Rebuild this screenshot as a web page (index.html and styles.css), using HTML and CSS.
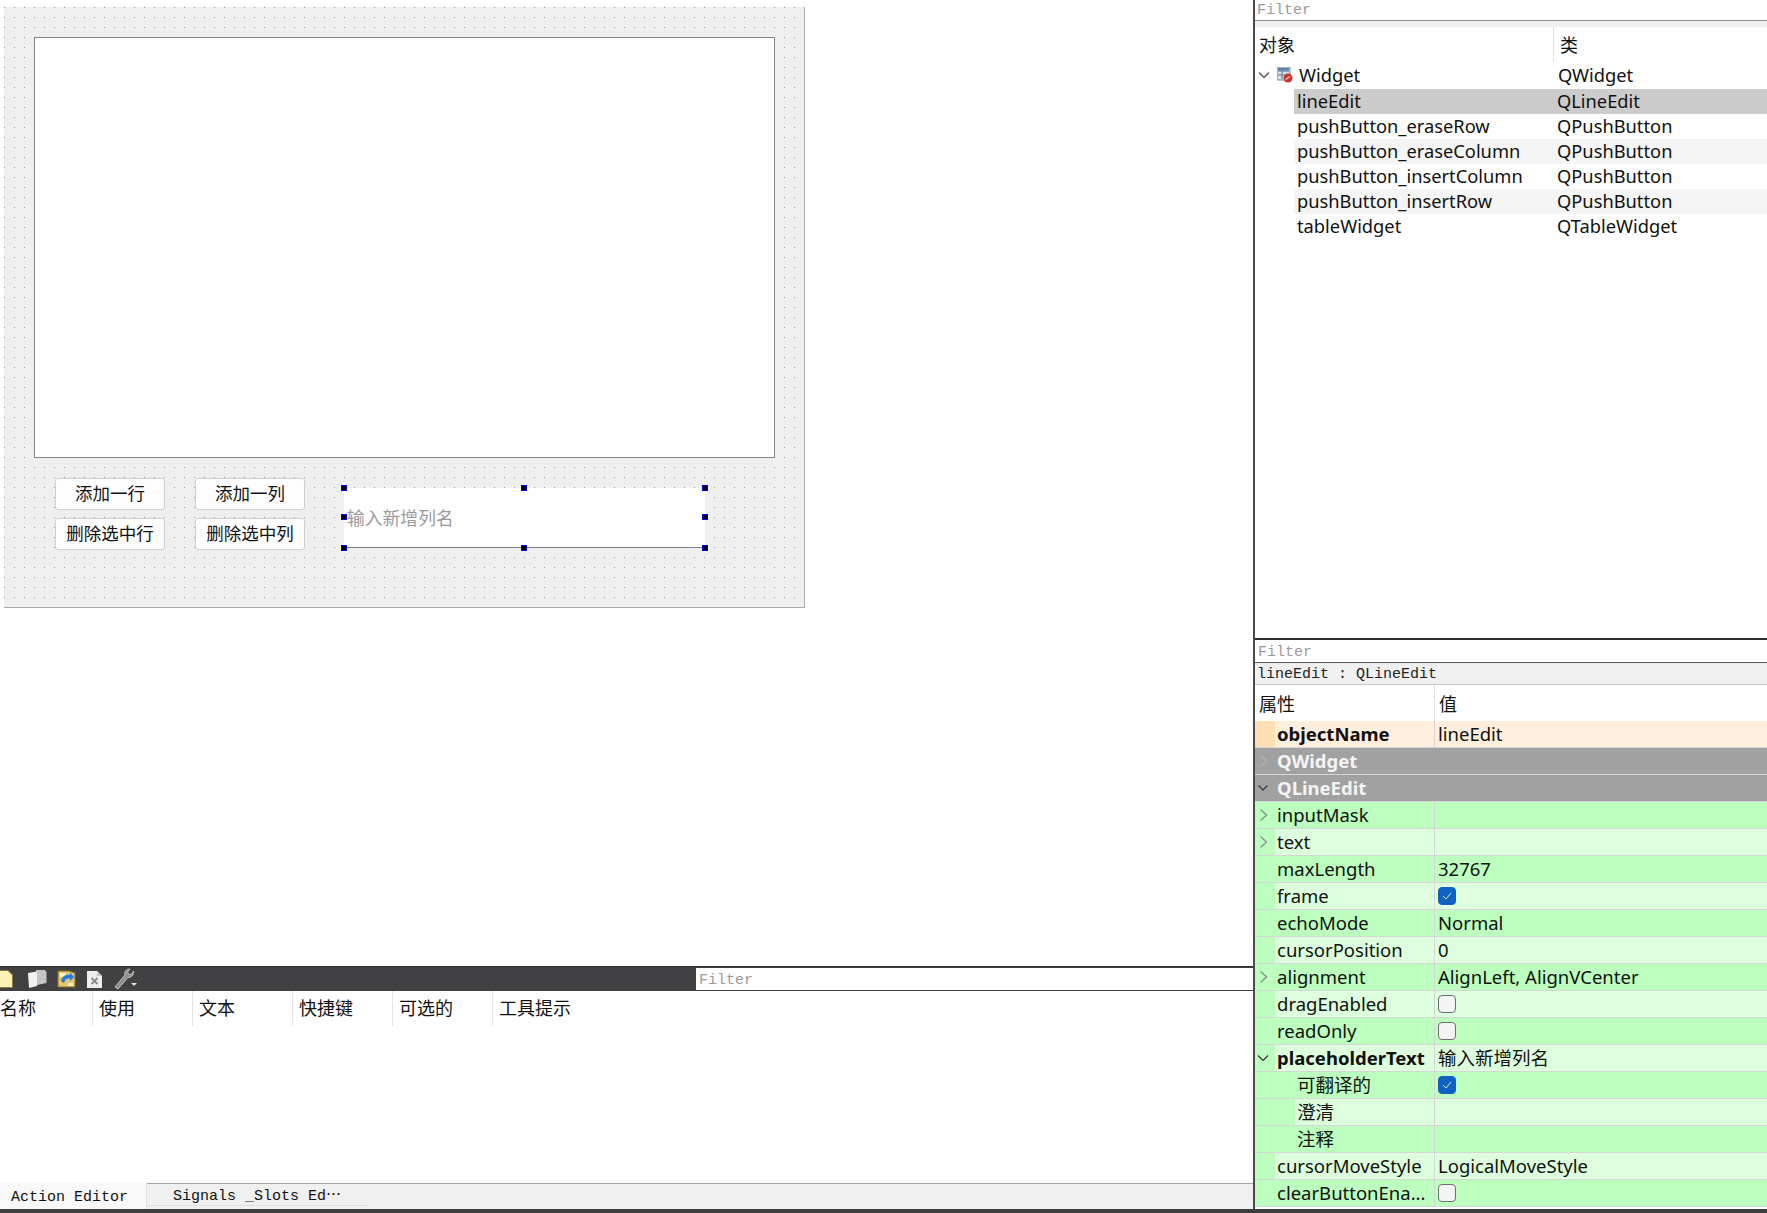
FILE: index.html
```html
<!DOCTYPE html>
<html lang="zh-CN">
<head>
  <meta charset="UTF-8">
  <title>Qt Designer</title>
  <link rel="stylesheet" href="styles.css">
</head>
<body>
  <div class="main">
    <div class="left_side">
      <div class="form_area">
        <div class="form">
          <div class="table_widget"></div>
          <div class="form_controls">
            <div class="button_grid">
              <button>添加一行</button>
              <button>添加一列</button>
              <button>删除选中行</button>
              <button>删除选中列</button>
            </div>
            <div class="line_edit">
              <span class="placeholder">输入新增列名</span>
              <i class="handle h_tl"></i><i class="handle h_tc"></i><i class="handle h_tr"></i>
              <i class="handle h_ml"></i><i class="handle h_mr"></i>
              <i class="handle h_bl"></i><i class="handle h_bc"></i><i class="handle h_br"></i>
            </div>
          </div>
        </div>
      </div>

      <div class="action_toolbar">
        <div class="action_icons">
          <svg class="tool_icon icon_new" width="13" height="18" viewBox="0 0 13 18"><path d="M-6 .5H8L12.5 5V17.500H-6z" fill="#fdf2b4" stroke="#8a7a3c"/></svg>
          <svg class="tool_icon icon_copy" width="20" height="20" viewBox="0 0 20 20"><path d="M9 1H18L19.500 3V14L10 16z" fill="#c4c4c4"/><path d="M1 4L10 2.500V17L2 19z" fill="#f2f2f2"/></svg>
          <svg class="tool_icon icon_open" width="19" height="20" viewBox="0 0 19 20"><path d="M1 2H12L18 4V18H1z" fill="#e5c66a" stroke="#8a6a1c"/><path d="M3 4H9V8H3zM11 14H16V17H11z" fill="#fff3c4"/><path d="M4 12C5 7 9 5 13 6L13 3.500L17 8L13 12V9.500C10 9 8 10 7 14z" fill="#2377e0"/></svg>
          <svg class="tool_icon icon_delete" width="17" height="19" viewBox="0 0 17 19"><path d="M1 1H11L16 6V18H1z" fill="#efefef"/><path d="M11 1V6H16z" fill="#c8c8c8"/><path d="M5.500 8L11.500 14M11.500 8L5.500 14" stroke="#8c8c8c" stroke-width="2"/></svg>
          <svg class="tool_icon icon_wrench" width="24" height="22" viewBox="0 0 24 22"><path d="M2 19L12 7C11 4 13 1 17 1L14.500 4L16 6.500L19 6L20.500 3C21 7 18 10 15 9.500L5 21z" fill="#8f8f8f" stroke="#d4d4d4" stroke-width=".8"/><path d="M18 15H24L21 18z" fill="#e4e4e4"/></svg>
        </div>
        <div class="filter_box action_filter">Filter</div>
      </div>

      <div class="action_header">
        <div class="action_col first_col">名称</div>
        <div class="action_col">使用</div>
        <div class="action_col">文本</div>
        <div class="action_col">快捷键</div>
        <div class="action_col">可选的</div>
        <div class="action_col">工具提示</div>
      </div>
      <div class="action_body"></div>

      <div class="tab_bar">
        <div class="tab tab_active">Action Editor</div>
        <div class="tab tab_other">Signals _Slots Ed⋯</div>
      </div>
    </div>

    <div class="right_side">
      <div class="filter_box object_filter">Filter</div>
      <div class="filter_gap"></div>
      <div class="tree_header">
        <div class="tree_col_name">对象</div>
        <div class="tree_col_class">类</div>
      </div>
      <div class="tree_root">
        <svg class="chevron root_chevron" width="12" height="12" viewBox="0 0 12 12"><path d="M1 3.500L6 8.500L11 3.500" fill="none" stroke="#444" stroke-width="1.200"/></svg>
        <svg class="widget_icon" width="16" height="16" viewBox="0 0 16 16">
          <rect x="0" y="0" width="13" height="13" fill="#d5dde6" stroke="#7d8a99"/>
          <path d="M1 4H12M1 8H12M5 1V12" stroke="#5c7894"/>
          <rect x="1" y="1" width="11" height="2.500" fill="#5a82ad"/>
          <circle cx="11" cy="11" r="4.500" fill="#c8362c"/>
          <path d="M8.500 12.500L13 9.500" stroke="#f4d0cc" stroke-width="1.200"/>
        </svg>
        <span class="root_name">Widget</span>
        <span class="tree_class">QWidget</span>
      </div>
      <div class="tree_row selected"><span class="tree_name">lineEdit</span><span class="tree_class">QLineEdit</span></div>
      <div class="tree_row"><span class="tree_name">pushButton_eraseRow</span><span class="tree_class">QPushButton</span></div>
      <div class="tree_row alt"><span class="tree_name">pushButton_eraseColumn</span><span class="tree_class">QPushButton</span></div>
      <div class="tree_row"><span class="tree_name">pushButton_insertColumn</span><span class="tree_class">QPushButton</span></div>
      <div class="tree_row alt"><span class="tree_name">pushButton_insertRow</span><span class="tree_class">QPushButton</span></div>
      <div class="tree_row"><span class="tree_name">tableWidget</span><span class="tree_class">QTableWidget</span></div>
      <div class="tree_space"></div>

      <div class="filter_box prop_filter">Filter</div>
      <div class="prop_title">lineEdit : QLineEdit</div>
      <div class="prop_header">
        <div class="prop_header_name">属性</div>
        <div class="prop_header_value">值</div>
      </div>

      <div class="prop_row orange"><div class="gutter"></div><div class="name bold">objectName</div><div class="value">lineEdit</div></div>
      <div class="prop_row group">
        <div class="gutter"><svg class="chevron" width="9" height="14" viewBox="0 0 9 14"><path d="M1.500 1.500L7.500 7L1.500 12.500" fill="none" stroke="#b4b4b4" stroke-width="1.200"/></svg></div>
        <div class="name bold">QWidget</div>
      </div>
      <div class="prop_row group">
        <div class="gutter"><svg class="chevron" width="12" height="8" viewBox="0 0 12 8"><path d="M1.500 1.500L6 6L10.500 1.500" fill="none" stroke="#333" stroke-width="1.200"/></svg></div>
        <div class="name bold">QLineEdit</div>
      </div>
      <div class="prop_row green">
        <div class="gutter"><svg class="chevron" width="9" height="14" viewBox="0 0 9 14"><path d="M1.500 1.500L7.500 7L1.500 12.500" fill="none" stroke="#888" stroke-width="1.200"/></svg></div>
        <div class="name">inputMask</div><div class="value"></div>
      </div>
      <div class="prop_row light">
        <div class="gutter"><svg class="chevron" width="9" height="14" viewBox="0 0 9 14"><path d="M1.500 1.500L7.500 7L1.500 12.500" fill="none" stroke="#888" stroke-width="1.200"/></svg></div>
        <div class="name">text</div><div class="value"></div>
      </div>
      <div class="prop_row green"><div class="gutter"></div><div class="name">maxLength</div><div class="value">32767</div></div>
      <div class="prop_row light"><div class="gutter"></div><div class="name">frame</div><div class="value"><span class="check checked"><svg width="10" height="8" viewBox="0 0 10 8"><path d="M1 4L4 7L9 1" fill="none" stroke="#cfe2f7" stroke-width="1"/></svg></span></div></div>
      <div class="prop_row green"><div class="gutter"></div><div class="name">echoMode</div><div class="value">Normal</div></div>
      <div class="prop_row light"><div class="gutter"></div><div class="name">cursorPosition</div><div class="value">0</div></div>
      <div class="prop_row green">
        <div class="gutter"><svg class="chevron" width="9" height="14" viewBox="0 0 9 14"><path d="M1.500 1.500L7.500 7L1.500 12.500" fill="none" stroke="#888" stroke-width="1.200"/></svg></div>
        <div class="name">alignment</div><div class="value">AlignLeft, AlignVCenter</div>
      </div>
      <div class="prop_row light"><div class="gutter"></div><div class="name">dragEnabled</div><div class="value"><span class="check"></span></div></div>
      <div class="prop_row green"><div class="gutter"></div><div class="name">readOnly</div><div class="value"><span class="check"></span></div></div>
      <div class="prop_row light">
        <div class="gutter"><svg class="chevron" width="12" height="8" viewBox="0 0 12 8"><path d="M1 1.500L6 6.500L11 1.500" fill="none" stroke="#333" stroke-width="1.200"/></svg></div>
        <div class="name bold">placeholderText</div><div class="value">输入新增列名</div>
      </div>
      <div class="prop_row green"><div class="gutter"></div><div class="name sub">可翻译的</div><div class="value"><span class="check checked"><svg width="10" height="8" viewBox="0 0 10 8"><path d="M1 4L4 7L9 1" fill="none" stroke="#cfe2f7" stroke-width="1"/></svg></span></div></div>
      <div class="prop_row light sub_light"><div class="gutter"></div><div class="name sub">澄清</div><div class="value"></div></div>
      <div class="prop_row green"><div class="gutter"></div><div class="name sub">注释</div><div class="value"></div></div>
      <div class="prop_row light"><div class="gutter"></div><div class="name">cursorMoveStyle</div><div class="value">LogicalMoveStyle</div></div>
      <div class="prop_row green"><div class="gutter"></div><div class="name">clearButtonEna...</div><div class="value"><span class="check"></span></div></div>
    </div>
  </div>
  <div class="bottom_edge"></div>
</body>
</html>
```

FILE: styles.css
```css
:root {
  --ui_font: "Noto Sans", "Noto Sans CJK SC", sans-serif;
  --mono_font: "Liberation Mono", "Noto Sans CJK SC", monospace;
  --cell_line: #d6d6d6;
}

html, body {
  margin: 0;
  height: 100%;
  background-color: white;
  overflow: hidden;
}

body {
  display: flex;
  flex-direction: column;
  height: 1213px;
  font-family: var(--ui_font);
  font-size: 18.5px;
  color: #111;
}

.main {
  display: flex;
  height: 1209px;
}

.left_side {
  width: 1253px;
  display: flex;
  flex-direction: column;
}

.right_side {
  width: 512px;
  border-left: 2px solid #4a4a4a;
  display: flex;
  flex-direction: column;
}

.bottom_edge {
  height: 4px;
  background-color: #3e3e40;
}

/* form being edited */
.form_area {
  height: 966px;
  padding: 7px 0 0 4px;
  box-sizing: border-box;
}

.form {
  width: 801px;
  height: 601px;
  box-sizing: border-box;
  padding: 30px 0 0 30px;
  background-color: #efefef;
  background-image: radial-gradient(circle at .5px .5px, #999 .6px, transparent .7px);
  background-size: 10px 10px;
  border-right: 1.500px solid #ababab;
  border-bottom: 1.500px solid #ababab;
}

.table_widget {
  width: 741px;
  height: 421px;
  box-sizing: border-box;
  background-color: white;
  border: 1.500px solid #82878c;
}

.form_controls {
  display: flex;
  margin: 20px 0 0 21px;
}

.button_grid {
  display: grid;
  grid-template-columns: 110px 110px;
  grid-auto-rows: 32px;
  column-gap: 30px;
  row-gap: 8px;
}

button {
  font-family: "Noto Sans CJK SC", sans-serif;
  font-size: 17.500px;
  line-height: 26px;
  color: #111;
  background-color: #fdfdfd;
  border: 1px solid #cfcfcf;
  border-radius: 3px;
  padding: 0 0 3px;
}

.line_edit {
  position: relative;
  width: 361px;
  height: 60px;
  margin: 10px 0 0 39px;
  box-sizing: border-box;
  display: flex;
  align-items: center;
  padding: 0 0 2px 3px;
  background-color: white;
  border-bottom: 1.500px solid #808080;
}

.placeholder {
  font-family: "Noto Sans CJK SC", sans-serif;
  font-size: 17.800px;
  color: #9a9a9a;
}

.handle {
  position: absolute;
  width: 4px;
  height: 4px;
  background-color: #000;
  border: 1px solid #0000e0;
}

.h_tl { left: -3px; top: -3px; }
.h_tc { left: 177px; top: -3px; }
.h_tr { right: -3px; top: -3px; }
.h_ml { left: -3px; top: 26px; }
.h_mr { right: -3px; top: 26px; }
.h_bl { left: -3px; bottom: -4px; }
.h_bc { left: 177px; bottom: -4px; }
.h_br { right: -3px; bottom: -4px; }

/* action editor */
.action_toolbar {
  height: 25px;
  box-sizing: border-box;
  display: flex;
  justify-content: space-between;
  align-items: center;
  background-color: #414143;
  border-top: 1px solid #2e2e2e;
}

.action_icons {
  display: flex;
  align-items: center;
}

.tool_icon {
  display: block;
}

.icon_new { margin-right: 14px; }
.icon_copy { margin-right: 10px; }
.icon_open { margin-right: 10px; }
.icon_delete { margin-right: 10px; }

.filter_box {
  font-family: var(--mono_font);
  font-size: 15px;
  color: #9a9a9a;
  background-color: white;
  box-sizing: border-box;
}

.action_filter {
  width: 557px;
  height: 22px;
  line-height: 25px;
  padding-left: 3px;
}

.action_header {
  height: 35px;
  display: flex;
  font-family: "Noto Sans CJK SC", sans-serif;
  font-size: 18px;
}

.action_col {
  width: 100px;
  box-sizing: border-box;
  padding-left: 6px;
  line-height: 33px;
  border-right: 1px solid #e4e4e4;
}

.first_col {
  width: 93px;
  padding-left: 0;
}

.action_col:last-child {
  border-right: 0;
}

.action_body {
  flex: 1;
}

.tab_bar {
  height: 26px;
  display: flex;
  font-family: var(--mono_font);
  font-size: 15px;
  background-color: #f0f0f0;
  border-top: 1px solid #a6a6a6;
  box-sizing: border-box;
}

.tab {
  box-sizing: border-box;
  line-height: 25px;
}

.tab_active {
  width: 147px;
  margin-top: -1px;
  padding: 2px 0 0 11px;
  background-color: #f8f8f8;
  border-right: 1px solid #e2e2e2;
}

.tab_other {
  width: 222px;
  height: 22px;
  padding-left: 26px;
  border-bottom: 1px solid #e0e0e0;
}

/* object inspector */
.object_filter {
  height: 21px;
  line-height: 21px;
  padding-left: 2px;
  border-bottom: 1.500px solid #8a8a8a;
}

.filter_gap {
  height: 6px;
  background-color: #f0f0f0;
}

.tree_header {
  height: 35px;
  display: flex;
  font-family: "Noto Sans CJK SC", sans-serif;
  font-size: 18px;
  line-height: 34px;
}

.tree_col_name {
  width: 299px;
  box-sizing: border-box;
  padding-left: 4px;
  border-right: 1px solid #e0e0e0;
}

.tree_col_class {
  padding-left: 6px;
}

.tree_root {
  height: 27px;
  box-sizing: border-box;
  padding-bottom: 2px;
  display: flex;
  align-items: center;
  font-size: 18.300px;
}

.root_chevron {
  margin-left: 3px;
}

.widget_icon {
  margin-left: 7px;
}

.root_name {
  width: 259px;
  margin-left: 6px;
}

.tree_row {
  height: 25px;
  line-height: 23px;
  margin-left: 39px;
  display: flex;
  font-size: 18.300px;
}

.tree_row.selected {
  background-color: #cccccc;
}

.tree_row.alt {
  background-color: #f5f5f5;
}

.tree_name {
  width: 260px;
  padding-left: 3px;
}

.tree_space {
  height: 399px;
  flex: none;
}

/* property editor */
.prop_filter {
  height: 25px;
  line-height: 26px;
  padding-left: 3px;
  border-top: 2px solid #2c2c2c;
  border-bottom: 1.500px solid #555;
}

.prop_title {
  height: 22px;
  line-height: 24px;
  box-sizing: border-box;
  padding-left: 2px;
  font-family: var(--mono_font);
  font-size: 15px;
  color: #222;
  background-color: #f0f0f0;
  border-bottom: 1px solid #c8c8c8;
}

.prop_header {
  height: 36px;
  display: flex;
  font-family: "Noto Sans CJK SC", sans-serif;
  font-size: 18px;
  line-height: 36px;
}

.prop_header_name {
  width: 180px;
  box-sizing: border-box;
  padding-left: 4px;
  border-right: 1px solid #e0e0e0;
}

.prop_header_value {
  padding-left: 4px;
}

.prop_row {
  height: 27px;
  box-sizing: border-box;
  display: flex;
  align-items: center;
  border-bottom: 1px solid var(--cell_line);
}

.gutter {
  width: 20px;
  height: 100%;
  display: flex;
  align-items: center;
  justify-content: center;
  flex: none;
}

.gutter .chevron {
  margin-right: 4px;
}

.name {
  width: 160px;
  height: 100%;
  line-height: 25px;
  box-sizing: border-box;
  padding-left: 2px;
  border-right: 1px solid var(--cell_line);
  flex: none;
  white-space: nowrap;
}

.name.sub {
  padding-left: 22px;
}

.bold {
  font-weight: 700;
}

.value {
  height: 100%;
  line-height: 25px;
  padding-left: 3px;
  display: flex;
  align-items: flex-start;
}

.prop_row.orange { background-color: #ffeedb; }
.prop_row.orange .gutter { background-color: #ffdfb3; }
.prop_row.group { background-color: #a1a1a1; color: #f4f4f4; }
.prop_row.group .name { border-right: 0; }
.prop_row.green { background-color: #bcffbf; }
.prop_row.light { background-color: #ddffdd; }
.prop_row.light .gutter { background-color: #bcffbf; }
.prop_row.sub_light .name {
  background: linear-gradient(to right, #bcffbf 20px, #ddffdd 20px);
}

.check {
  width: 18px;
  height: 18px;
  margin-top: 4px;
  box-sizing: border-box;
  background-color: #f4f4f4;
  border: 1px solid #6e6e6e;
  border-radius: 4px;
  display: flex;
  align-items: center;
  justify-content: center;
}

.check.checked {
  background-color: #0f62c2;
  border-color: #0f62c2;
}
```
